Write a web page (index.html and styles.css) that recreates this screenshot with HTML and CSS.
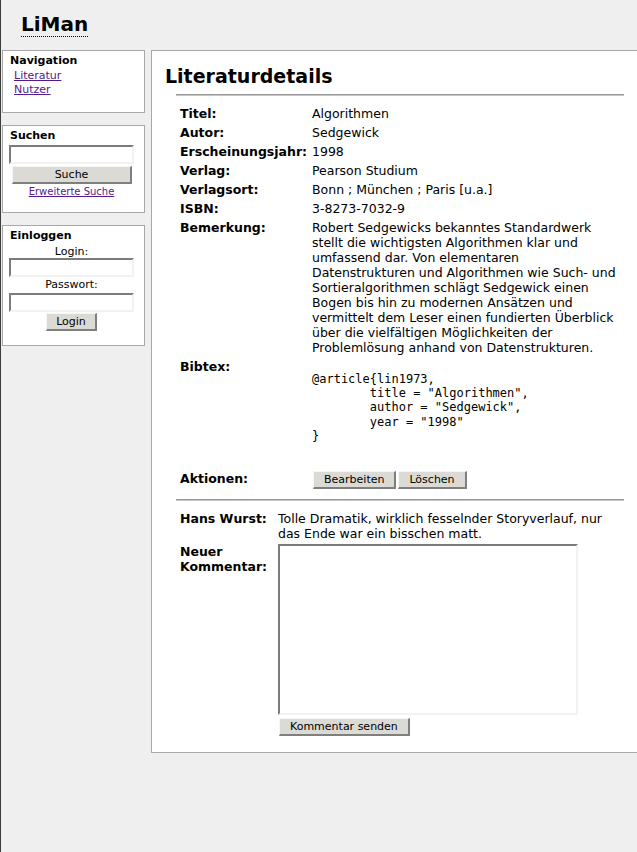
FILE: index.html
```html
<!DOCTYPE html>
<html lang="de">
<head>
<meta charset="utf-8">
<title>LiMan - Literaturdetails</title>
<link rel="stylesheet" href="styles.css">
</head>
<body>
<header class="top"><span class="logo">LiMan</span></header>
<div class="layout">
  <aside class="sidebar">
    <section class="box nav-box">
      <h3 class="box-title">Navigation</h3>
      <ul class="nav-list">
        <li><a href="#">Literatur</a></li>
        <li><a href="#">Nutzer</a></li>
      </ul>
    </section>
    <section class="box search-box">
      <h3 class="box-title">Suchen</h3>
      <input class="field" type="text">
      <button class="btn btn-search">Suche</button>
      <a class="small-link" href="#">Erweiterte Suche</a>
    </section>
    <section class="box login-box">
      <h3 class="box-title">Einloggen</h3>
      <label class="field-label">Login:</label>
      <input class="field" type="text">
      <label class="field-label">Passwort:</label>
      <input class="field" type="password">
      <button class="btn btn-login">Login</button>
    </section>
  </aside>
  <main class="main">
    <h2 class="page-title">Literaturdetails</h2>
    <div class="content">
      <hr class="rule">
      <div class="details">
        <div class="label">Titel:</div><div class="value">Algorithmen</div>
        <div class="label">Autor:</div><div class="value">Sedgewick</div>
        <div class="label">Erscheinungsjahr:</div><div class="value">1998</div>
        <div class="label">Verlag:</div><div class="value">Pearson Studium</div>
        <div class="label">Verlagsort:</div><div class="value">Bonn ; München ; Paris [u.a.]</div>
        <div class="label">ISBN:</div><div class="value">3-8273-7032-9</div>
        <div class="label">Bemerkung:</div><div class="value">Robert Sedgewicks bekanntes Standardwerk stellt die wichtigsten Algorithmen klar und umfassend dar. Von elementaren Datenstrukturen und Algorithmen wie Such- und Sortieralgorithmen schlägt Sedgewick einen Bogen bis hin zu modernen Ansätzen und vermittelt dem Leser einen fundierten Überblick über die vielfältigen Möglichkeiten der Problemlösung anhand von Datenstrukturen.</div>
        <div class="label">Bibtex:</div><div class="value"><pre class="bibtex">@article{lin1973,
	title = "Algorithmen",
	author = "Sedgewick",
	year = "1998"
}</pre></div>
        <div class="label label-actions">Aktionen:</div><div class="value actions"><button class="btn btn-action">Bearbeiten</button><button class="btn btn-action">Löschen</button></div>
      </div>
      <hr class="rule rule-comments">
      <div class="comments">
        <div class="label label-comment">Hans Wurst:</div><div class="value comment-text">Tolle Dramatik, wirklich fesselnder Storyverlauf, nur das Ende war ein bisschen matt.</div>
        <div class="label">Neuer Kommentar:</div><div class="value"><textarea class="comment-input"></textarea><button class="btn btn-action btn-send">Kommentar senden</button></div>
      </div>
    </div>
  </main>
</div>
</body>
</html>
```

FILE: styles.css
```css
html, body {
  overflow-x: hidden;
}
body {
  margin: 0;
  min-height: 100vh;
  box-sizing: border-box;
  border-left: 1px solid #3c3c3c;
  background: #efefef;
  color: #000;
  font-family: "DejaVu Sans", Verdana, sans-serif;
  font-size: 12.5px;
}
.top {
  height: 50px;
  box-sizing: border-box;
  padding: 12px 0 0 20px;
}
.logo {
  font-size: 20px;
  font-weight: bold;
  border-bottom: 1px dotted #000;
}
.layout {
  display: flex;
  align-items: flex-start;
  gap: 6px;
  padding-left: 1px;
}
.sidebar {
  width: 143px;
  flex: none;
  display: flex;
  flex-direction: column;
  gap: 12px;
  font-size: 11px;
}
.box {
  background: #fff;
  border: 1px solid #a8a8a8;
  padding: 3px 10px 14px 6px;
  display: flex;
  flex-direction: column;
  align-items: center;
}
.box-title {
  align-self: stretch;
  margin: 0;
  padding-left: 1px;
  font-size: 11px;
  line-height: 13px;
  font-weight: bold;
}
.nav-box {
  height: 63px;
  box-sizing: border-box;
}
.nav-list {
  align-self: stretch;
  list-style: none;
  margin: 2px 0 0;
  padding: 0 0 0 5px;
  line-height: 14px;
}
a {
  color: #551a8b;
}
.field {
  box-sizing: border-box;
  width: 125px;
  height: 19px;
  margin: 0;
  padding: 0 2px;
  border-style: solid;
  border-width: 2px;
  border-color: #7c7c7c #f2f2f2 #f2f2f2 #7c7c7c;
  background: #fff;
  font: 11px "DejaVu Sans", sans-serif;
}
.search-box .field {
  margin-top: 3px;
}
.btn {
  box-sizing: border-box;
  margin: 0;
  padding: 1px 9px;
  background: #dcdad5;
  border-style: solid;
  border-width: 1px 2px 2px 1px;
  border-color: #f6f6f6 #7f7f7f #7f7f7f #f6f6f6;
  font: 11px/13px "DejaVu Sans", sans-serif;
  color: #000;
}
.btn-action {
  padding: 1px 10px;
}
.btn-search {
  width: 120px;
  margin-top: 2px;
  margin-left: 1px;
}
.small-link {
  margin-top: 2px;
  font-size: 10px;
  line-height: 12px;
}
.field-label {
  margin-top: 3px;
  line-height: 13px;
}
.login-box .field + .field-label {
  margin-top: 1px;
}
.login-box .field:last-of-type {
  margin-top: 2px;
}
.btn-login {
  margin-top: 1px;
}
.main {
  flex: 1;
  min-width: 0;
  background: #fff;
  border: 1px solid #a8a8a8;
  border-right: none;
  padding: 14px 13px 14px 13px;
}
.page-title {
  margin: 0;
  font-size: 19px;
  line-height: 22px;
  font-weight: bold;
}
.content {
  margin-left: 11px;
}
.rule {
  height: 0;
  margin: 7px 0 0;
  border: none;
  border-top: 1px solid #9a9a9a;
  border-bottom: 1px solid #c4c4c4;
}
.details {
  display: grid;
  grid-template-columns: 136px 1fr;
  margin-top: 8px;
  line-height: 15px;
}
.label {
  padding: 2px 0 2px 4px;
  font-weight: bold;
}
.value {
  padding: 2px 0;
}
.details .value {
  padding-right: 4px;
}
.bibtex {
  margin: 13px 0;
  font-family: "DejaVu Sans Mono", monospace;
  font-size: 12px;
  line-height: 14.2px;
  tab-size: 8;
}
.label-actions {
  padding-top: 13px;
}
.actions {
  padding-top: 13px;
  display: flex;
  gap: 2px;
  padding-left: 1px;
}
.rule-comments {
  margin-top: 8px;
}
.comments {
  display: grid;
  grid-template-columns: 102px 1fr;
  margin-top: 8px;
  line-height: 15px;
}
.label-comment,
.comment-text {
  padding-bottom: 1px;
}
.comment-text {
  max-width: 330px;
}
.comment-input {
  display: block;
  box-sizing: border-box;
  width: 300px;
  height: 171px;
  margin: 0;
  padding: 2px;
  resize: none;
  border-style: solid;
  border-width: 2px;
  border-color: #7c7c7c #f2f2f2 #f2f2f2 #7c7c7c;
  background: #fff;
}
.btn-send {
  margin-top: 3px;
  margin-left: 1px;
}
```
